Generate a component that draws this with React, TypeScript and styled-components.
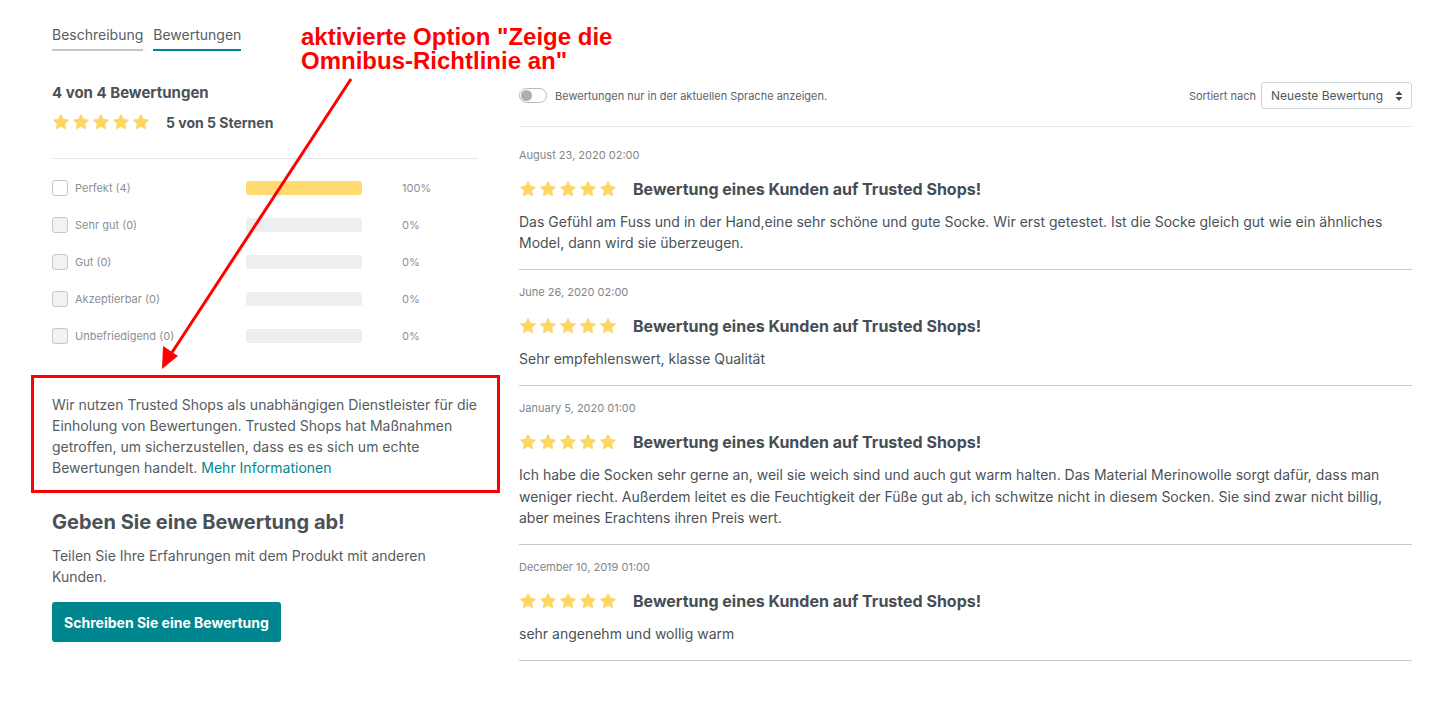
import React from "react";
import styled, { createGlobalStyle } from "styled-components";

const Global = createGlobalStyle`
  html, body { margin: 0; padding: 0; background: #fff; }
  body { font-family: Inter, "Noto Sans", "Liberation Sans", sans-serif; color: #4b5257; }
  * { box-sizing: border-box; }
`;

const Page = styled.div`
  position: relative;
  width: 1453px;
  min-height: 709px;
  padding: 25px 41px 0 52px;
`;

const Tabs = styled.div`
  display: flex;
  gap: 10px;
`;

const Tab = styled.div<{ $active?: boolean }>`
  font-size: 14px;
  line-height: 20px;
  padding-bottom: 4px;
  color: #565d63;
  border-bottom: 2px solid ${(p) => (p.$active ? "#00878f" : "#c3c7cb")};
`;

const Columns = styled.div`
  display: grid;
  grid-template-columns: 426px 893px;
  column-gap: 41px;
  margin-top: 31px;
`;

const Left = styled.div`
  display: flex;
  flex-direction: column;
`;

const SummaryTitle = styled.div`
  font-size: 15px;
  line-height: 20px;
  font-weight: 700;
  color: #4a5157;
  margin-top: 1px;
`;

const SummaryStars = styled.div`
  display: flex;
  align-items: center;
  height: 20px;
  margin-top: 9px;
`;

const StarRow = styled.div<{ $size: number; $gap: number }>`
  display: flex;
  gap: ${(p) => p.$gap}px;
  svg { width: ${(p) => p.$size}px; height: ${(p) => p.$size}px; display: block; }
`;

const SummaryLabel = styled.span`
  margin-left: 16px;
  font-size: 14px;
  font-weight: 700;
  color: #4a5157;
`;

const Divider = styled.div<{ $color?: string }>`
  height: 1px;
  background: ${(p) => p.$color || "#e6e7e8"};
`;

const SummaryDivider = styled(Divider)`
  margin-top: 26px;
`;

const RatingList = styled.div`
  padding-top: 10px;
`;

const RatingRow = styled.div`
  display: grid;
  grid-template-columns: 194px 116px auto;
  align-items: center;
  height: 37px;
`;

const CheckLabel = styled.label`
  display: flex;
  align-items: center;
  gap: 7px;
  font-size: 11px;
  color: #8a9096;
`;

const Box = styled.span<{ $enabled?: boolean }>`
  width: 16px;
  height: 16px;
  border: 1px solid #c4c8cc;
  border-radius: 3px;
  background: ${(p) => (p.$enabled ? "#fff" : "#f1f2f3")};
`;

const Track = styled.div`
  height: 14px;
  border-radius: 3px;
  background: #eeeeee;
  overflow: hidden;
`;

const Fill = styled.div`
  height: 100%;
  background: #ffdc72;
  border-radius: 3px;
`;

const Pct = styled.span`
  margin-left: 40px;
  font-size: 11px;
  color: #8a9096;
`;

const InfoBox = styled.div`
  margin: 21px -22px 0 -21px;
  border: 3px solid #ff0000;
  padding: 15.5px 19px 12.5px 18px;
  font-size: 14px;
  line-height: 21px;
  color: #555c62;
`;

const Link = styled.a`
  color: #00878f;
  text-decoration: none;
`;

const GiveTitle = styled.h2`
  margin: 16px 0 0;
  font-size: 20px;
  line-height: 26px;
  font-weight: 700;
  color: #4a5157;
`;

const GiveText = styled.p`
  margin: 10px 0 0;
  font-size: 14px;
  line-height: 21px;
  color: #555c62;
`;

const Button = styled.button`
  margin-top: 15px;
  align-self: flex-start;
  height: 40px;
  width: 229px;
  border: none;
  border-radius: 3px;
  background: #00868e;
  color: #fff;
  font-family: inherit;
  font-size: 14px;
  font-weight: 700;
`;

const Right = styled.div`
  display: flex;
  flex-direction: column;
`;

const Toolbar = styled.div`
  display: flex;
  align-items: center;
  justify-content: space-between;
  height: 27px;
`;

const ToggleWrap = styled.label`
  display: flex;
  align-items: center;
  gap: 8px;
  font-size: 11px;
  color: #5d646a;
`;

const Switch = styled.span`
  display: flex;
  align-items: center;
  width: 28px;
  height: 15px;
  border: 1px solid #b5babe;
  border-radius: 8px;
  padding: 1px;
  &::before {
    content: "";
    width: 11px;
    height: 11px;
    border-radius: 50%;
    background: #a9afb4;
  }
`;

const SortWrap = styled.div`
  display: flex;
  align-items: center;
  gap: 5px;
  font-size: 11px;
  color: #5d646a;
`;

const Select = styled.div`
  display: flex;
  align-items: center;
  justify-content: space-between;
  width: 151px;
  height: 27px;
  border: 1px solid #cfd2d5;
  border-radius: 3px;
  padding: 0 8px 0 9px;
  font-size: 12px;
  color: #50575d;
`;

const ToolbarDivider = styled(Divider)`
  margin-top: 17px;
`;

const Reviews = styled.div`
  margin-top: 6px;
`;

const Review = styled.article`
  padding: 14px 0 15.5px;
  border-bottom: 1px solid #c7c9cb;
`;

const DateLine = styled.div`
  font-size: 11px;
  line-height: 16px;
  color: #7f868c;
`;

const ReviewHead = styled.div`
  display: flex;
  align-items: center;
  height: 22px;
  margin-top: 15px;
`;

const ReviewTitle = styled.h3`
  margin: 0 0 0 16px;
  font-size: 16px;
  font-weight: 700;
  color: #464d53;
`;

const Body = styled.p`
  margin: 11px 0 0;
  font-size: 14px;
  line-height: 21.4px;
  color: #4b5257;
`;

const Annotation = styled.div`
  position: absolute;
  left: 301px;
  top: 25px;
  font-family: "Liberation Sans", Arial, sans-serif;
  font-weight: 700;
  font-size: 24px;
  line-height: 24px;
  color: #ff0000;
`;

const ArrowSvg = styled.svg`
  position: absolute;
  left: 0;
  top: 0;
  pointer-events: none;
`;

const Star = () => (
  <svg viewBox="0 0 24 24">
    <polygon
      points="12,2.8 14.8,8.7 21.2,9.5 16.5,13.9 17.7,20.3 12,17.1 6.3,20.3 7.5,13.9 2.8,9.5 9.2,8.7"
      fill="#fdd663"
      stroke="#fdd663"
      strokeWidth="2"
      strokeLinejoin="round"
    />
  </svg>
);

const Stars = () => (
  <StarRow $size={18} $gap={2}>
    {[0, 1, 2, 3, 4].map((i) => (
      <Star key={i} />
    ))}
  </StarRow>
);

const ratings = [
  { label: "Perfekt (4)", pct: 100 },
  { label: "Sehr gut (0)", pct: 0 },
  { label: "Gut (0)", pct: 0 },
  { label: "Akzeptierbar (0)", pct: 0 },
  { label: "Unbefriedigend (0)", pct: 0 },
];

const reviews = [
  {
    date: "August 23, 2020 02:00",
    text: "Das Gefühl am Fuss und in der Hand,eine sehr schöne und gute Socke. Wir erst getestet. Ist die Socke gleich gut wie ein ähnliches Model, dann wird sie überzeugen.",
  },
  { date: "June 26, 2020 02:00", text: "Sehr empfehlenswert, klasse Qualität" },
  {
    date: "January 5, 2020 01:00",
    text: "Ich habe die Socken sehr gerne an, weil sie weich sind und auch gut warm halten. Das Material Merinowolle sorgt dafür, dass man weniger riecht. Außerdem leitet es die Feuchtigkeit der Füße gut ab, ich schwitze nicht in diesem Socken. Sie sind zwar nicht billig, aber meines Erachtens ihren Preis wert.",
  },
  { date: "December 10, 2019 01:00", text: "sehr angenehm und wollig warm" },
];

export default function App() {
  return (
    <Page>
      <Global />
      <Tabs>
        <Tab>Beschreibung</Tab>
        <Tab $active>Bewertungen</Tab>
      </Tabs>
      <Columns>
        <Left>
          <SummaryTitle>4 von 4 Bewertungen</SummaryTitle>
          <SummaryStars>
            <Stars />
            <SummaryLabel>5 von 5 Sternen</SummaryLabel>
          </SummaryStars>
          <SummaryDivider />
          <RatingList>
            {ratings.map((r) => (
              <RatingRow key={r.label}>
                <CheckLabel>
                  <Box $enabled={r.pct > 0} />
                  {r.label}
                </CheckLabel>
                <Track>
                  <Fill style={{ width: `${r.pct}%` }} />
                </Track>
                <Pct>{r.pct}%</Pct>
              </RatingRow>
            ))}
          </RatingList>
          <InfoBox>
            Wir nutzen Trusted Shops als unabhängigen Dienstleister für die Einholung von Bewertungen. Trusted Shops hat
            Maßnahmen getroffen, um sicherzustellen, dass es es sich um echte Bewertungen handelt.{" "}
            <Link href="#">Mehr Informationen</Link>
          </InfoBox>
          <GiveTitle>Geben Sie eine Bewertung ab!</GiveTitle>
          <GiveText>Teilen Sie Ihre Erfahrungen mit dem Produkt mit anderen Kunden.</GiveText>
          <Button>Schreiben Sie eine Bewertung</Button>
        </Left>
        <Right>
          <Toolbar>
            <ToggleWrap>
              <Switch />
              Bewertungen nur in der aktuellen Sprache anzeigen.
            </ToggleWrap>
            <SortWrap>
              Sortiert nach
              <Select>
                Neueste Bewertung
                <svg width="8" height="12" viewBox="0 0 8 12">
                  <path d="M4 1 L7.5 5 H0.5 Z M4 11 L7.5 7 H0.5 Z" fill="#4b5257" />
                </svg>
              </Select>
            </SortWrap>
          </Toolbar>
          <ToolbarDivider />
          <Reviews>
            {reviews.map((r) => (
              <Review key={r.date}>
                <DateLine>{r.date}</DateLine>
                <ReviewHead>
                  <Stars />
                  <ReviewTitle>Bewertung eines Kunden auf Trusted Shops!</ReviewTitle>
                </ReviewHead>
                <Body>{r.text}</Body>
              </Review>
            ))}
          </Reviews>
        </Right>
      </Columns>
      <Annotation>
        aktivierte Option "Zeige die
        <br />
        Omnibus-Richtlinie an"
      </Annotation>
      <ArrowSvg width="1453" height="709" viewBox="0 0 1453 709">
        <line x1="351" y1="79" x2="171" y2="354" stroke="#ff0000" strokeWidth="3" />
        <polygon points="162,369 163,346 178,356" fill="#ff0000" />
      </ArrowSvg>
    </Page>
  );
}
